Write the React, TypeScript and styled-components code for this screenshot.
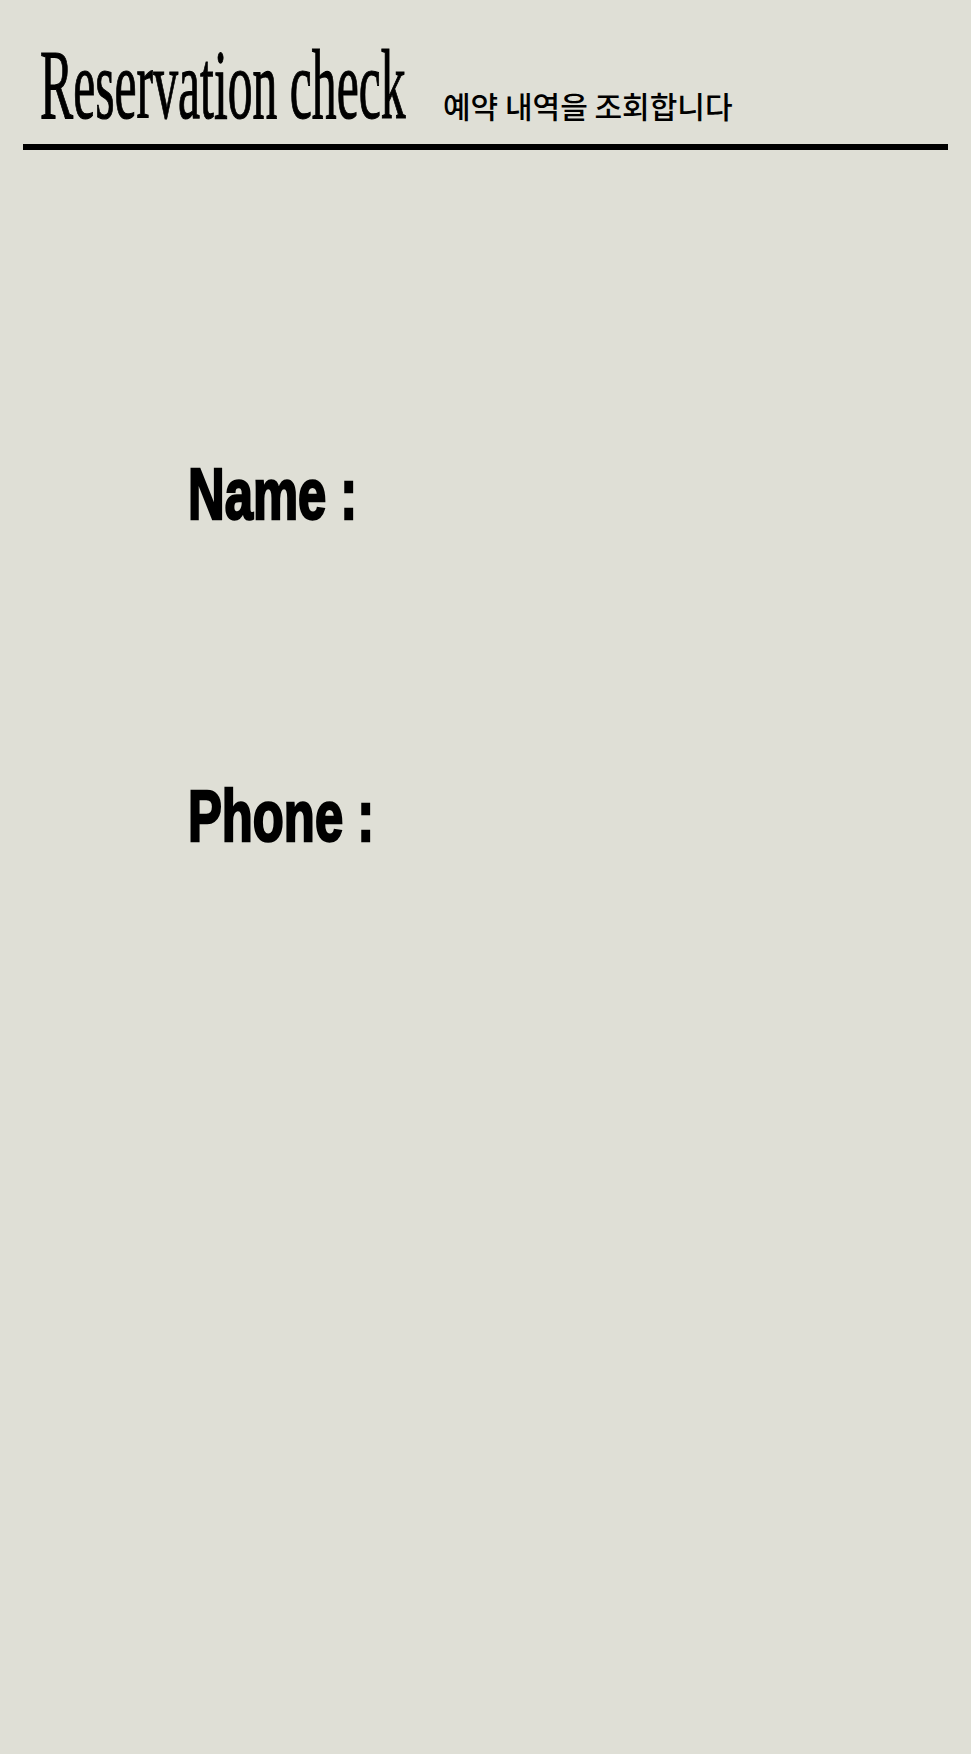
import styled, { createGlobalStyle } from 'styled-components';

const GlobalStyle = createGlobalStyle`
html, body {
    background: #dfdfd6;
    min-height: 100%;
}
body {
    margin: 8px;
    color: #000;
    font-family: 'Liberation Sans', Arial, sans-serif;
}
`;

const fields = ['Name', 'Phone'];

export default function App () {
    return (
        <>
            <GlobalStyle />
            <Header>
                <Title>Reservation check</Title>
                <Subtitle>예약 내역을 조회합니다</Subtitle>
            </Header>
            <Form>
                {fields.map(x => (
                    <Row key={x}>
                        <Label>{x} :</Label>
                    </Row>
                ))}
            </Form>
        </>
    );
}

const Header = styled.header`
display: flex;
align-items: baseline;
margin: 0 15px;
padding: 27px 0 9px 17px;
border-bottom: 6px solid #000;
`;

const Title = styled.h1`
display: inline-block;
width: 366px;
margin: 0;
font-family: 'Liberation Serif', 'Times New Roman', serif;
font-size: 100px;
font-weight: 400;
line-height: 1;
white-space: nowrap;
-webkit-text-stroke: 1.2px #000;
transform: scaleX(0.497);
transform-origin: left center;
`;

const Subtitle = styled.span`
margin-left: 37px;
font-family: 'Noto Sans CJK KR', 'Noto Sans', sans-serif;
font-size: 30px;
font-weight: 500;
`;

const Form = styled.form`
display: flex;
flex-direction: column;
gap: 250px;
padding: 308px 0 0 180px;
`;

const Row = styled.div`
display: flex;
align-items: baseline;
`;

const Label = styled.label`
display: inline-block;
font-family: 'Liberation Sans', Arial, sans-serif;
font-size: 72px;
font-weight: 700;
line-height: 1;
white-space: nowrap;
-webkit-text-stroke: 2.5px #000;
transform: scaleX(0.705);
transform-origin: left center;
`;
